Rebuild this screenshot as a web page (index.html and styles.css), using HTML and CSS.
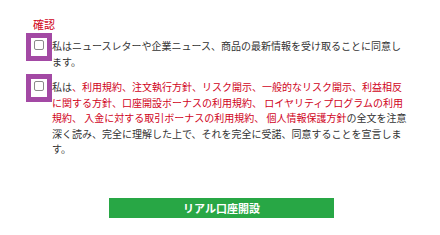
FILE: index.html
```html
<!DOCTYPE html>
<html lang="ja">
<head>
<meta charset="utf-8">
<link rel="stylesheet" href="styles.css">
</head>
<body>
<div class="page">
  <div class="title">確認</div>
  <div class="row row-first">
    <div class="mark"><span class="box"></span></div>
    <p class="text">私はニュースレターや企業ニュース、商品の最新情報を受け取ることに同意します。</p>
  </div>
  <div class="row row-second">
    <div class="mark"><span class="box"></span></div>
    <p class="text">私は<span class="red">、利用規約、注文執行方針、リスク開示、一般的なリスク開示、利益相反に関する方針、口座開設ボーナスの利用規約、 ロイヤリティプログラムの利用規約、 入金に対する取引ボーナスの利用規約、 個人情報保護方針</span>の全文を注意深く読み、完全に理解した上で、それを完全に受諾、同意することを宣言します。</p>
  </div>
  <div class="actions">
    <button class="btn" type="button">リアル口座開設</button>
  </div>
</div>
</body>
</html>
```
FILE: styles.css
```css
html, body {
  margin: 0;
  padding: 0;
  background: #ffffff;
}
body {
  font-family: "Noto Sans CJK JP", "Noto Sans", sans-serif;
  color: #333333;
}
.page {
  width: 440px;
  height: 235px;
  padding-top: 17px;
  box-sizing: border-box;
}
.title {
  margin-left: 33px;
  font-size: 11px;
  line-height: 14px;
  color: #d0021b;
}
.row {
  display: flex;
  align-items: flex-start;
  margin-left: 26px;
}
.row-first {
  margin-top: 2px;
}
.row-second {
  margin-top: 5px;
}
.mark {
  flex: none;
  width: 16px;
  height: 18px;
  border: 5px solid #a349a4;
  background: #ffffff;
  box-sizing: content-box;
  display: flex;
  align-items: flex-start;
  justify-content: center;
}
.box {
  display: block;
  width: 8px;
  height: 8px;
  margin-top: 2px;
  border: 1px solid #8a8a8a;
  border-radius: 2px;
  background: #ffffff;
}
.text {
  margin: 0;
  padding-top: 5px;
  width: 358px;
  font-size: 10px;
  line-height: 15.5px;
}
.red {
  color: #d0021b;
}
.actions {
  display: flex;
  justify-content: center;
  padding-left: 3px;
  margin-top: 41px;
}
.btn {
  width: 225px;
  height: 20px;
  border: none;
  margin: 0;
  padding: 0;
  background: #28a745;
  color: #ffffff;
  font-family: "Noto Sans CJK JP", "Noto Sans", sans-serif;
  font-size: 11px;
  font-weight: bold;
  line-height: 20px;
}
```
